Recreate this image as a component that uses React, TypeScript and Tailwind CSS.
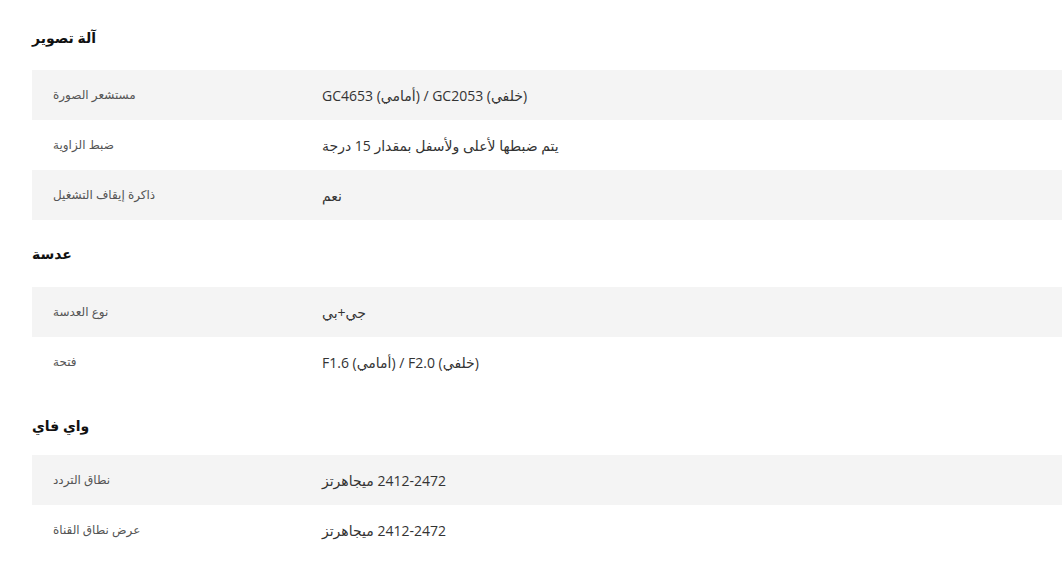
import { ReactNode } from 'react';

type Spec = {
  label: string;
  value: ReactNode;
};

type Section = {
  title: string;
  rows: Spec[];
};

const sections: Section[] = [
  {
    title: 'آلة تصوير',
    rows: [
      { label: 'مستشعر الصورة', value: 'GC4653 (أمامي) / GC2053 (خلفي)' },
      { label: 'ضبط الزاوية', value: 'يتم ضبطها لأعلى ولأسفل بمقدار 15 درجة' },
      { label: 'ذاكرة إيقاف التشغيل', value: 'نعم' },
    ],
  },
  {
    title: 'عدسة',
    rows: [
      { label: 'نوع العدسة', value: 'جي+بي' },
      { label: 'فتحة', value: 'F1.6 (أمامي) / F2.0 (خلفي)' },
    ],
  },
  {
    title: 'واي فاي',
    rows: [
      { label: 'نطاق التردد', value: <span dir="rtl">2412-2472 ميجاهرتز</span> },
      { label: 'عرض نطاق القناة', value: <span dir="rtl">2412-2472 ميجاهرتز</span> },
    ],
  },
];

const headingClass = ['h-[66px]', 'h-[67px]', 'h-[68px] pt-[8px]'];

const SpecRow = ({ label, value, striped }: Spec & { striped: boolean }) => (
  <div className={`flex h-[50px] items-center ${striped ? 'bg-[#f4f4f4]' : 'bg-white'}`}>
    <div className="w-[290px] shrink-0 pl-[21px] text-[12px] text-[#555]">{label}</div>
    <div className="text-[14px] text-[#333]">{value}</div>
  </div>
);

export default function App() {
  return (
    <div
      className="min-h-screen bg-white pl-8 pr-px pt-1"
      style={{ fontFamily: '"Open Sans", "DejaVu Sans", sans-serif' }}
    >
      {sections.map((section, i) => (
        <div key={section.title}>
          <div className={`flex items-center ${headingClass[i]}`}>
            <h2 className="text-[14px] font-bold text-[#111]">{section.title}</h2>
          </div>
          {section.rows.map((row, j) => (
            <SpecRow key={row.label} label={row.label} value={row.value} striped={j % 2 === 0} />
          ))}
        </div>
      ))}
    </div>
  );
}
